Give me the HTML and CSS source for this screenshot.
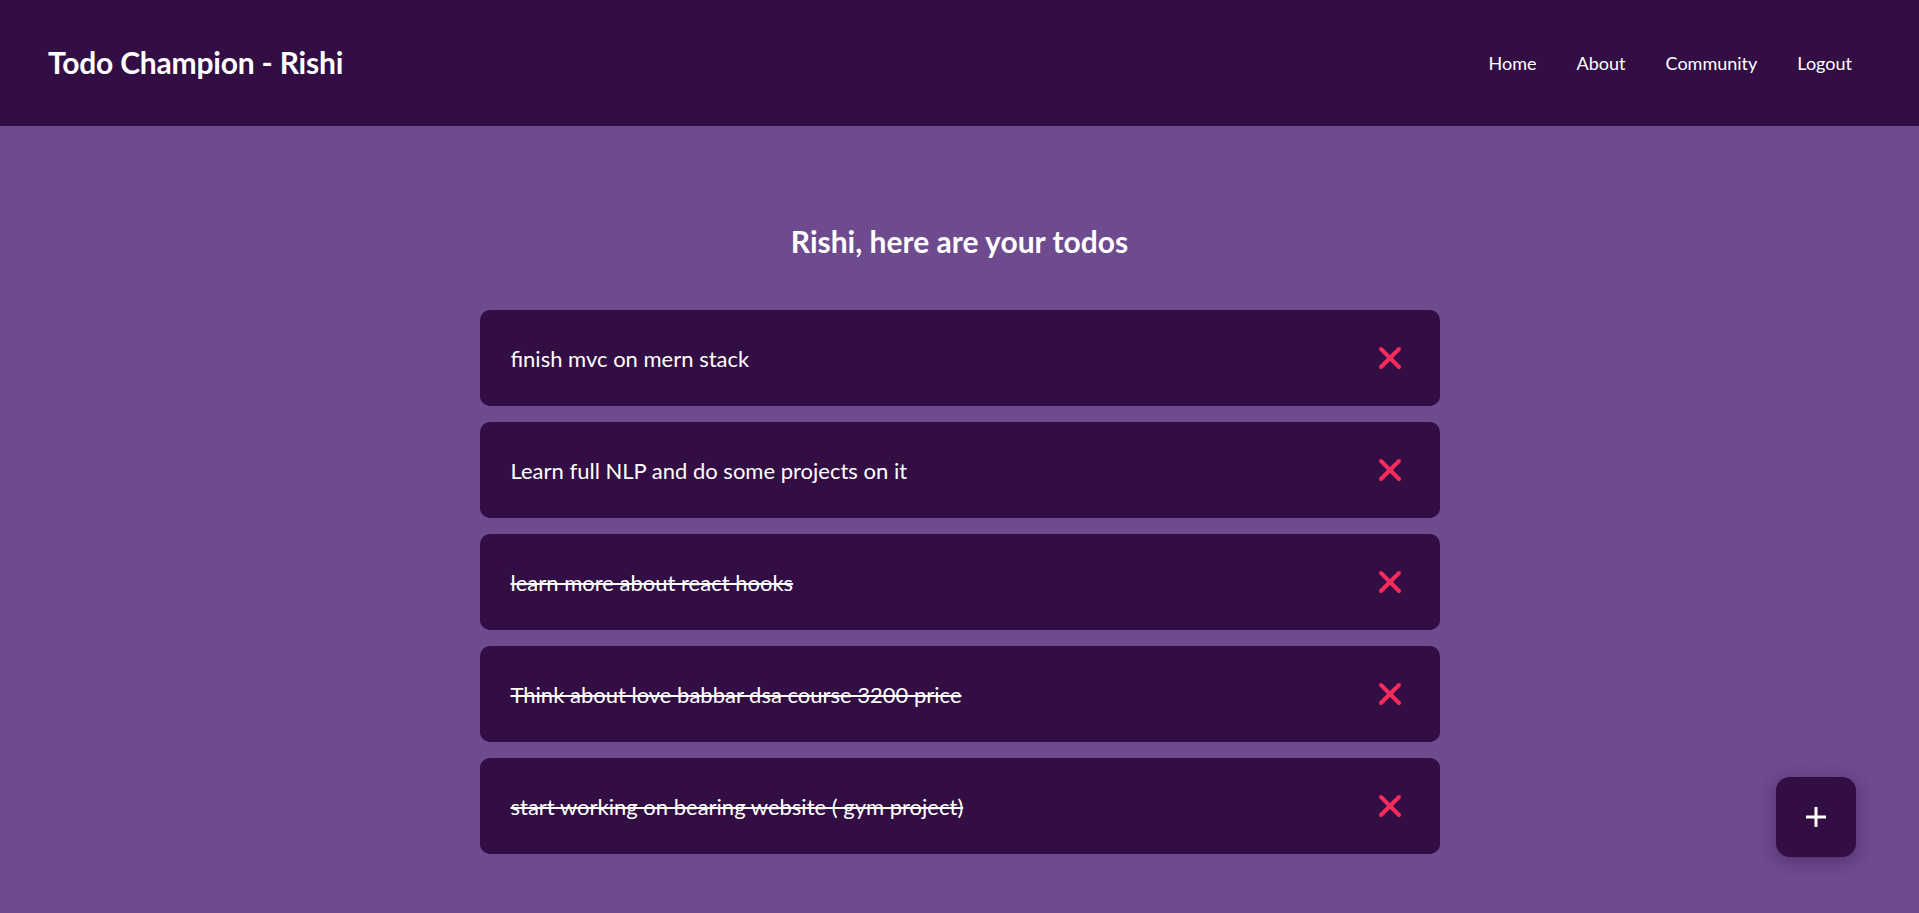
FILE: index.html
```html
<!DOCTYPE html>
<html lang="en">
<head>
<meta charset="utf-8">
<title>Todo Champion</title>
<link rel="stylesheet" href="styles.css">
</head>
<body>
<header class="topbar">
  <div class="brand">Todo Champion - Rishi</div>
  <nav class="nav">
    <a href="#">Home</a>
    <a href="#">About</a>
    <a href="#">Community</a>
    <a href="#">Logout</a>
  </nav>
</header>
<main class="main">
  <h2 class="heading">Rishi, here are your todos</h2>
  <ul class="todos">
    <li class="todo"><span class="todo-text">finish mvc on mern stack</span>
      <button class="del" aria-label="delete"><svg viewBox="0 0 24 24" width="24" height="24"><path d="M3 3L21 21M21 3L3 21" stroke="#f72c5b" stroke-width="4" stroke-linecap="round" fill="none"/></svg></button></li>
    <li class="todo"><span class="todo-text">Learn full NLP and do some projects on it</span>
      <button class="del" aria-label="delete"><svg viewBox="0 0 24 24" width="24" height="24"><path d="M3 3L21 21M21 3L3 21" stroke="#f72c5b" stroke-width="4" stroke-linecap="round" fill="none"/></svg></button></li>
    <li class="todo done"><span class="todo-text">learn more about react hooks</span>
      <button class="del" aria-label="delete"><svg viewBox="0 0 24 24" width="24" height="24"><path d="M3 3L21 21M21 3L3 21" stroke="#f72c5b" stroke-width="4" stroke-linecap="round" fill="none"/></svg></button></li>
    <li class="todo done"><span class="todo-text">Think about love babbar dsa course 3200 price</span>
      <button class="del" aria-label="delete"><svg viewBox="0 0 24 24" width="24" height="24"><path d="M3 3L21 21M21 3L3 21" stroke="#f72c5b" stroke-width="4" stroke-linecap="round" fill="none"/></svg></button></li>
    <li class="todo done"><span class="todo-text">start working on bearing website ( gym project)</span>
      <button class="del" aria-label="delete"><svg viewBox="0 0 24 24" width="24" height="24"><path d="M3 3L21 21M21 3L3 21" stroke="#f72c5b" stroke-width="4" stroke-linecap="round" fill="none"/></svg></button></li>
  </ul>
</main>
<button class="fab" aria-label="add"><svg viewBox="0 0 22 22" width="22" height="22"><path d="M11 1V21M1 11H21" stroke="#ffffff" stroke-width="3" fill="none"/></svg></button>
</body>
</html>
```
FILE: styles.css
```css
* { box-sizing: border-box; }
html, body {
  margin: 0;
  padding: 0;
}
body {
  background: #6e4a8e;
  font-family: Lato, "Open Sans", sans-serif;
  color: #ffffff;
  min-height: 913px;
}
.topbar {
  height: 126px;
  background: #320e45;
  display: flex;
  align-items: center;
  justify-content: space-between;
  padding: 0 47px 0 48px;
}
.brand {
  font-size: 30px;
  font-weight: 700;
  letter-spacing: -0.2px;
  margin-top: -2px;
}
.nav {
  display: flex;
}
.nav a {
  color: #ffffff;
  text-decoration: none;
  font-size: 18px;
  padding: 0 20px;
}
.main {
  padding: 97px 0 60px;
  display: flex;
  flex-direction: column;
  align-items: center;
}
.heading {
  margin: 0 0 51px;
  font-size: 30px;
  line-height: 36px;
  font-weight: 700;
}
.todos {
  list-style: none;
  margin: 0;
  padding: 0;
  width: 960px;
  display: flex;
  flex-direction: column;
  gap: 16px;
}
.todo {
  height: 96px;
  background: #320e45;
  border-radius: 10px;
  display: flex;
  align-items: center;
  justify-content: space-between;
  padding: 0 38px 0 31px;
  font-size: 22px;
}
.done .todo-text {
  text-decoration: line-through;
}
.del {
  background: none;
  border: 0;
  padding: 0;
  display: flex;
  cursor: pointer;
}
.fab {
  position: fixed;
  right: 63px;
  bottom: 56px;
  width: 80px;
  height: 80px;
  border: 0;
  border-radius: 14px;
  background: #320e45;
  display: flex;
  align-items: center;
  justify-content: center;
  box-shadow: 0 4px 16px rgba(30, 5, 45, 0.35);
  cursor: pointer;
}
```
